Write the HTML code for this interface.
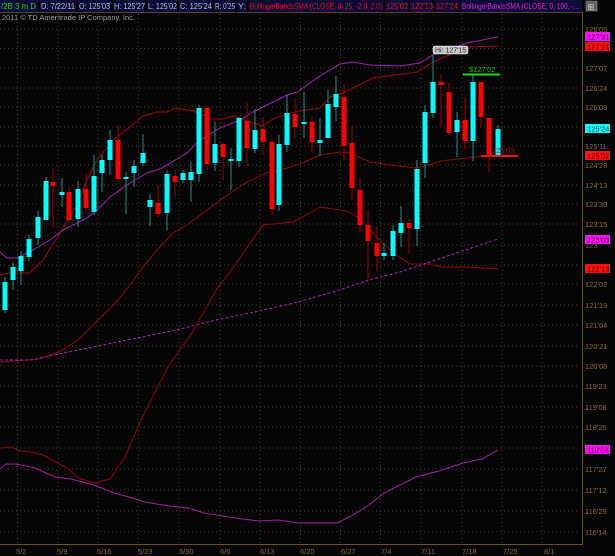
<!DOCTYPE html>
<html><head><meta charset="utf-8"><style>
html,body{margin:0;padding:0;background:#050505;}
svg{display:block;font-family:"Liberation Sans",sans-serif;}
</style></head><body>
<svg width="615" height="556" viewBox="0 0 615 556" xmlns="http://www.w3.org/2000/svg">
<rect width="615" height="556" fill="#050505"/>
<!-- header -->
<rect x="0" y="0" width="582" height="12" fill="#0c0c3a"/>
<g stroke="#000" stroke-width="2">
<line x1="39" y1="0" x2="39" y2="12"/><line x1="77" y1="0" x2="77" y2="12"/><line x1="112" y1="0" x2="112" y2="12"/><line x1="146" y1="0" x2="146" y2="12"/><line x1="178" y1="0" x2="178" y2="12"/><line x1="213" y1="0" x2="213" y2="12"/><line x1="236" y1="0" x2="236" y2="12"/><line x1="248" y1="0" x2="248" y2="12"/><line x1="384" y1="0" x2="384" y2="12"/><line x1="409" y1="0" x2="409" y2="12"/><line x1="434" y1="0" x2="434" y2="12"/><line x1="460" y1="0" x2="460" y2="12"/>
</g>
<line x1="0" y1="12.5" x2="582" y2="12.5" stroke="#5a4420" stroke-width="1"/>
<g font-size="8" fill="#b8b8c8" lengthAdjust="spacingAndGlyphs">
<text x="1" y="9" fill="#20d020" textLength="35" lengthAdjust="spacingAndGlyphs">/2B 3 m D</text>
<text x="41" y="9" textLength="34" lengthAdjust="spacingAndGlyphs">D: 7/22/11</text>
<text x="79" y="9" textLength="31" lengthAdjust="spacingAndGlyphs">O: 125'03</text>
<text x="114" y="9" textLength="31" lengthAdjust="spacingAndGlyphs">H: 125'27</text>
<text x="148" y="9" textLength="29" lengthAdjust="spacingAndGlyphs">L: 125'02</text>
<text x="180" y="9" textLength="32" lengthAdjust="spacingAndGlyphs">C: 125'24</text>
<text x="215" y="9" textLength="20" lengthAdjust="spacingAndGlyphs">R: 0'25</text>
<text x="238" y="9" textLength="8" lengthAdjust="spacingAndGlyphs">Y:</text>
<text x="250" y="9" fill="#e01010" textLength="132" lengthAdjust="spacingAndGlyphs">BollingerBandsSMA (CLOSE, 0, 25, -2.0, 2.0)</text>
<text x="386" y="9" fill="#e01010" textLength="22" lengthAdjust="spacingAndGlyphs">125'02</text>
<text x="411" y="9" fill="#e01010" textLength="22" lengthAdjust="spacingAndGlyphs">122'13</text>
<text x="436" y="9" fill="#e01010" textLength="22" lengthAdjust="spacingAndGlyphs">127'24</text>
<text x="462" y="9" fill="#d020d0" textLength="117" lengthAdjust="spacingAndGlyphs">BollingerBandsSMA (CLOSE, 0, 100, -...</text>
</g>
<rect x="586" y="1" width="11" height="10" fill="#606060" stroke="#909090" stroke-width="0.5"/>
<text x="587.5" y="9.5" font-size="8" fill="#ddd">⊞</text>
<text x="2" y="20" font-size="7.5" fill="#9a9a9a">2011 © TD Ameritrade IP Company, Inc.</text>
<!-- grid -->
<g stroke="#4a3a1c" stroke-width="1" stroke-dasharray="1,3">
<line x1="0" y1="29" x2="578" y2="29"/><line x1="0" y1="48.5" x2="578" y2="48.5"/><line x1="0" y1="68" x2="578" y2="68"/><line x1="0" y1="88" x2="578" y2="88"/><line x1="0" y1="107" x2="578" y2="107"/><line x1="0" y1="127" x2="578" y2="127"/><line x1="0" y1="146" x2="578" y2="146"/><line x1="0" y1="165" x2="578" y2="165"/><line x1="0" y1="185" x2="578" y2="185"/><line x1="0" y1="204" x2="578" y2="204"/><line x1="0" y1="224" x2="578" y2="224"/><line x1="0" y1="245" x2="578" y2="245"/><line x1="0" y1="265" x2="578" y2="265"/><line x1="0" y1="284" x2="578" y2="284"/><line x1="0" y1="305" x2="578" y2="305"/><line x1="0" y1="325" x2="578" y2="325"/><line x1="0" y1="346" x2="578" y2="346"/><line x1="0" y1="366" x2="578" y2="366"/><line x1="0" y1="386" x2="578" y2="386"/><line x1="0" y1="407" x2="578" y2="407"/><line x1="0" y1="427" x2="578" y2="427"/><line x1="0" y1="448" x2="578" y2="448"/><line x1="0" y1="469" x2="578" y2="469"/><line x1="0" y1="490" x2="578" y2="490"/><line x1="0" y1="511" x2="578" y2="511"/><line x1="0" y1="532" x2="578" y2="532"/>
<line x1="17.5" y1="14" x2="17.5" y2="544"/><line x1="58" y1="14" x2="58" y2="544"/><line x1="98" y1="14" x2="98" y2="544"/><line x1="138.5" y1="14" x2="138.5" y2="544"/><line x1="179" y1="14" x2="179" y2="544"/><line x1="220" y1="14" x2="220" y2="544"/><line x1="260" y1="14" x2="260" y2="544"/><line x1="300.5" y1="14" x2="300.5" y2="544"/><line x1="340.5" y1="14" x2="340.5" y2="544"/><line x1="380.5" y1="14" x2="380.5" y2="544"/><line x1="421" y1="14" x2="421" y2="544"/><line x1="462" y1="14" x2="462" y2="544"/><line x1="502" y1="14" x2="502" y2="544"/><line x1="542" y1="14" x2="542" y2="544"/>
</g>
<!-- axes -->
<g stroke="#6a5024" stroke-width="1">
<line x1="582.5" y1="12" x2="582.5" y2="544"/>
<line x1="0" y1="544.5" x2="583" y2="544.5"/>
</g>
<g font-size="7.5" fill="#8a6a34">
<text x="585" y="32">128'05</text><text x="585" y="71">127'07</text><text x="585" y="91">126'24</text><text x="585" y="110">126'09</text><text x="585" y="149">125'11</text><text x="585" y="168">124'28</text><text x="585" y="188">124'13</text><text x="585" y="207">123'30</text><text x="585" y="227">123'15</text><text x="585" y="248">123</text><text x="585" y="287">122'02</text><text x="585" y="308">121'19</text><text x="585" y="328">121'04</text><text x="585" y="349">120'21</text><text x="585" y="369">120'06</text><text x="585" y="389">119'23</text><text x="585" y="410">119'08</text><text x="585" y="430">118'25</text><text x="585" y="472">117'27</text><text x="585" y="493">117'12</text><text x="585" y="514">116'29</text><text x="585" y="535">116'14</text>
<text x="16" y="554">5/2</text><text x="57" y="554">5/9</text><text x="97" y="554">5/16</text><text x="138" y="554">5/23</text><text x="179" y="554">5/30</text><text x="220" y="554">6/6</text><text x="260" y="554">6/13</text><text x="300" y="554">6/20</text><text x="341" y="554">6/27</text><text x="381" y="554">7/4</text><text x="421" y="554">7/11</text><text x="462" y="554">7/18</text><text x="503" y="554">7/25</text><text x="544" y="554">8/1</text>
</g>
<!-- lines -->
<g fill="none" stroke-width="1">
<polyline stroke="#9a0a0a" points="0,275 10,273 20,273 30,273 43,260 60,233 77,205 87,180 97,160 113,140 130,127 143,116 157,112 167,112 175,108 193,111 213,119 223,119 233,116 247,121 263,126 273,119 287,114 300,111 320,108 330,97 343,93 373,78 417,72 433,62 467,47 498,46"/>
<polyline stroke="#a020b0" points="0,252 7,258 17,258 33,250 50,240 63,230 87,218 97,210 110,197 130,183 147,173 160,169 187,153 200,140 220,128 240,120 253,112 267,105 287,95 297,92 317,78 340,64 353,62 370,65 400,66 420,63 433,55 467,43 498,37"/>
<polyline stroke="#8a0a0a" points="0,362 39,359 59,352 78,340 98,320 118,300 130,285 143,267 157,250 173,233 187,225 207,210 223,198 247,182 267,173 287,168 300,164 320,155 340,152 350,153 370,162 390,165 417,168 430,165 440,161 467,158 498,155"/>
<polyline stroke="#8a0a0a" points="0,448 12,447 20,451 31,452 43,455 69,469 78,478 94,483 110,479 125,457 141,420 169,365 192,333 216,290 230,272 263,225 293,222 310,213 320,207 347,211 357,217 373,233 393,253 410,264 430,264 440,267 467,267 498,269"/>
<polyline stroke="#a020a0" points="0,469 6,464 16,464 35,468 55,477 71,479 94,485 114,493 129,497 145,502 169,506 188,508 204,513 235,518 259,521 278,520 298,523 337,523 353,515 369,505 384,493 416,477 439,471 463,463 482,459 498,450"/>
<polyline stroke="#a020b0" stroke-dasharray="3,2" points="0,360 31,360 59,354 98,346 137,338 176,330 216,320 255,312 294,303 333,292 369,280 400,272 498,239"/>
</g>
<g>
<line x1="5" y1="277" x2="5" y2="313" stroke="#1f8f8f"/><rect x="2.5" y="282" width="5" height="28" fill="#00ffff"/>
<line x1="13" y1="262" x2="13" y2="290" stroke="#1f8f8f"/><rect x="10.5" y="267" width="5" height="13" fill="#00ffff"/>
<line x1="21" y1="251" x2="21" y2="285" stroke="#1f8f8f"/><rect x="18.5" y="256" width="5" height="15" fill="#00ffff"/>
<line x1="29" y1="235" x2="29" y2="261" stroke="#1f8f8f"/><rect x="26.5" y="239" width="5" height="18" fill="#00ffff"/>
<line x1="38" y1="211" x2="38" y2="245" stroke="#1f8f8f"/><rect x="35.5" y="217" width="5" height="21" fill="#00ffff"/>
<line x1="46" y1="177" x2="46" y2="220" stroke="#1f8f8f"/><rect x="43.5" y="181" width="5" height="39" fill="#00ffff"/>
<line x1="53" y1="169" x2="53" y2="228" stroke="#9a0000"/><rect x="50.5" y="182" width="5" height="4" fill="#ff0000"/>
<line x1="62" y1="178" x2="62" y2="207" stroke="#1f8f8f"/><rect x="59.5" y="192" width="5" height="3" fill="#00ffff"/>
<line x1="69" y1="187" x2="69" y2="222" stroke="#9a0000"/><rect x="66.5" y="192" width="5" height="28" fill="#ff0000"/>
<line x1="78" y1="181" x2="78" y2="227" stroke="#1f8f8f"/><rect x="75.5" y="189" width="5" height="30" fill="#00ffff"/>
<line x1="86" y1="173" x2="86" y2="213" stroke="#9a0000"/><rect x="83.5" y="189" width="5" height="19" fill="#ff0000"/>
<line x1="94" y1="155" x2="94" y2="215" stroke="#1f8f8f"/><rect x="91.5" y="176" width="5" height="36" fill="#00ffff"/>
<line x1="102" y1="155" x2="102" y2="192" stroke="#1f8f8f"/><rect x="99.5" y="160" width="5" height="13" fill="#00ffff"/>
<line x1="110" y1="130" x2="110" y2="175" stroke="#1f8f8f"/><rect x="107.5" y="140" width="5" height="20" fill="#00ffff"/>
<line x1="118" y1="125" x2="118" y2="182" stroke="#9a0000"/><rect x="115.5" y="140" width="5" height="39" fill="#ff0000"/>
<line x1="126" y1="172" x2="126" y2="214" stroke="#1f8f8f"/><rect x="123.5" y="177" width="5" height="2" fill="#00ffff"/>
<line x1="134" y1="160" x2="134" y2="187" stroke="#1f8f8f"/><rect x="131.5" y="166" width="5" height="7" fill="#00ffff"/>
<line x1="143" y1="134" x2="143" y2="166" stroke="#1f8f8f"/><rect x="140.5" y="153" width="5" height="10" fill="#00ffff"/>
<line x1="150" y1="194" x2="150" y2="226" stroke="#1f8f8f"/><rect x="147.5" y="200" width="5" height="7" fill="#00ffff"/>
<line x1="158" y1="185" x2="158" y2="217" stroke="#9a0000"/><rect x="155.5" y="203" width="5" height="11" fill="#ff0000"/>
<line x1="167" y1="170" x2="167" y2="230" stroke="#1f8f8f"/><rect x="164.5" y="174" width="5" height="39" fill="#00ffff"/>
<line x1="175" y1="170" x2="175" y2="197" stroke="#9a0000"/><rect x="172.5" y="176" width="5" height="6" fill="#ff0000"/>
<line x1="183" y1="170" x2="183" y2="183" stroke="#1f8f8f"/><rect x="180.5" y="173" width="5" height="7" fill="#00ffff"/>
<line x1="191" y1="162" x2="191" y2="202" stroke="#1f8f8f"/><rect x="188.5" y="172" width="5" height="8" fill="#00ffff"/>
<line x1="199" y1="105" x2="199" y2="182" stroke="#1f8f8f"/><rect x="196.5" y="108" width="5" height="66" fill="#00ffff"/>
<line x1="207" y1="105" x2="207" y2="170" stroke="#9a0000"/><rect x="204.5" y="108" width="5" height="56" fill="#ff0000"/>
<line x1="215" y1="122" x2="215" y2="171" stroke="#1f8f8f"/><rect x="212.5" y="144" width="5" height="19" fill="#00ffff"/>
<line x1="223" y1="143" x2="223" y2="180" stroke="#9a0000"/><rect x="220.5" y="144" width="5" height="13" fill="#ff0000"/>
<line x1="231" y1="148" x2="231" y2="190" stroke="#1f8f8f"/><rect x="228.5" y="159" width="5" height="2" fill="#00ffff"/>
<line x1="239" y1="117" x2="239" y2="167" stroke="#1f8f8f"/><rect x="236.5" y="118" width="5" height="43" fill="#00ffff"/>
<line x1="247" y1="103" x2="247" y2="166" stroke="#9a0000"/><rect x="244.5" y="121" width="5" height="27" fill="#ff0000"/>
<line x1="255" y1="109" x2="255" y2="153" stroke="#1f8f8f"/><rect x="252.5" y="130" width="5" height="19" fill="#00ffff"/>
<line x1="263" y1="117" x2="263" y2="155" stroke="#9a0000"/><rect x="260.5" y="129" width="5" height="13" fill="#ff0000"/>
<line x1="272" y1="140" x2="272" y2="215" stroke="#9a0000"/><rect x="269.5" y="142" width="5" height="67" fill="#ff0000"/>
<line x1="279" y1="135" x2="279" y2="211" stroke="#1f8f8f"/><rect x="276.5" y="144" width="5" height="61" fill="#00ffff"/>
<line x1="287" y1="95" x2="287" y2="152" stroke="#1f8f8f"/><rect x="284.5" y="113" width="5" height="32" fill="#00ffff"/>
<line x1="295" y1="99" x2="295" y2="139" stroke="#9a0000"/><rect x="292.5" y="114" width="5" height="13" fill="#ff0000"/>
<line x1="304" y1="92" x2="304" y2="138" stroke="#1f8f8f"/><rect x="301.5" y="122" width="5" height="2" fill="#00ffff"/>
<line x1="312" y1="116" x2="312" y2="152" stroke="#9a0000"/><rect x="309.5" y="122" width="5" height="20" fill="#ff0000"/>
<line x1="320" y1="118" x2="320" y2="156" stroke="#1f8f8f"/><rect x="317.5" y="140" width="5" height="3" fill="#00ffff"/>
<line x1="328" y1="90" x2="328" y2="138" stroke="#1f8f8f"/><rect x="325.5" y="104" width="5" height="34" fill="#00ffff"/>
<line x1="336" y1="76" x2="336" y2="121" stroke="#1f8f8f"/><rect x="333.5" y="94" width="5" height="13" fill="#00ffff"/>
<line x1="344" y1="84" x2="344" y2="160" stroke="#9a0000"/><rect x="341.5" y="97" width="5" height="49" fill="#ff0000"/>
<line x1="352" y1="125" x2="352" y2="200" stroke="#9a0000"/><rect x="349.5" y="143" width="5" height="45" fill="#ff0000"/>
<line x1="360" y1="178" x2="360" y2="233" stroke="#9a0000"/><rect x="357.5" y="190" width="5" height="35" fill="#ff0000"/>
<line x1="368" y1="210" x2="368" y2="280" stroke="#9a0000"/><rect x="365.5" y="225" width="5" height="16" fill="#ff0000"/>
<line x1="377" y1="226" x2="377" y2="271" stroke="#9a0000"/><rect x="374.5" y="243" width="5" height="13" fill="#ff0000"/>
<line x1="384" y1="243" x2="384" y2="260" stroke="#1f8f8f"/><rect x="381.5" y="253" width="5" height="3" fill="#00ffff"/>
<line x1="393" y1="225" x2="393" y2="260" stroke="#1f8f8f"/><rect x="390.5" y="231" width="5" height="25" fill="#00ffff"/>
<line x1="401" y1="206" x2="401" y2="247" stroke="#1f8f8f"/><rect x="398.5" y="223" width="5" height="10" fill="#00ffff"/>
<line x1="409" y1="219" x2="409" y2="254" stroke="#9a0000"/><rect x="406.5" y="223" width="5" height="5" fill="#ff0000"/>
<line x1="417" y1="160" x2="417" y2="246" stroke="#1f8f8f"/><rect x="414.5" y="169" width="5" height="60" fill="#00ffff"/>
<line x1="425" y1="105" x2="425" y2="178" stroke="#1f8f8f"/><rect x="422.5" y="112" width="5" height="51" fill="#00ffff"/>
<line x1="433" y1="55" x2="433" y2="118" stroke="#1f8f8f"/><rect x="430.5" y="82" width="5" height="31" fill="#00ffff"/>
<line x1="441" y1="74" x2="441" y2="126" stroke="#9a0000"/><rect x="438.5" y="82" width="5" height="3" fill="#ff0000"/>
<line x1="449" y1="83" x2="449" y2="135" stroke="#9a0000"/><rect x="446.5" y="92" width="5" height="41" fill="#ff0000"/>
<line x1="457" y1="112" x2="457" y2="157" stroke="#1f8f8f"/><rect x="454.5" y="120" width="5" height="12" fill="#00ffff"/>
<line x1="465" y1="97" x2="465" y2="149" stroke="#9a0000"/><rect x="462.5" y="120" width="5" height="21" fill="#ff0000"/>
<line x1="473" y1="74" x2="473" y2="161" stroke="#1f8f8f"/><rect x="470.5" y="82" width="5" height="59" fill="#00ffff"/>
<line x1="481" y1="82" x2="481" y2="127" stroke="#9a0000"/><rect x="478.5" y="82" width="5" height="35" fill="#ff0000"/>
<line x1="489" y1="118" x2="489" y2="172" stroke="#9a0000"/><rect x="486.5" y="118" width="5" height="39" fill="#ff0000"/>
<line x1="498" y1="125" x2="498" y2="157" stroke="#1f8f8f"/><rect x="495.5" y="129" width="5" height="27" fill="#00ffff"/>
</g>
<!-- annotations -->
<rect x="433" y="46" width="35" height="8" rx="2" fill="#c8c8c8" stroke="#eee" stroke-width="0.5"/>
<text x="435" y="52.5" font-size="7" fill="#333">Hi: 127'15</text>
<line x1="463" y1="74.5" x2="500" y2="74.5" stroke="#10e010" stroke-width="2"/>
<text x="469" y="72" font-size="7.5" fill="#10c010">$127'02</text>
<line x1="481" y1="156" x2="518" y2="156" stroke="#ff1010" stroke-width="2"/>
<text x="492" y="153" font-size="7.5" fill="#a01010">125'03</text>
<!-- price boxes -->
<g font-size="7.5">
<rect x="585" y="32" width="25" height="9" fill="#ff10ff"/><text x="587" y="39.5" fill="#400040">127'31</text>
<rect x="585" y="42" width="25" height="9" fill="#ff1010"/><text x="587" y="49.5" fill="#500000">127'24</text>
<rect x="585" y="124" width="25" height="9" fill="#10ffff"/><text x="587" y="131.5" fill="#004040">125'24</text>
<rect x="585" y="151" width="25" height="9" fill="#ff1010"/><text x="587" y="158.5" fill="#500000">125'02</text>
<rect x="585" y="235" width="25" height="9" fill="#ff10ff"/><text x="587" y="242.5" fill="#400040">123'03</text>
<rect x="585" y="264" width="25" height="9" fill="#ff1010"/><text x="587" y="271.5" fill="#500000">122'13</text>
<rect x="585" y="445" width="25" height="9" fill="#ff10ff"/><text x="587" y="452.5" fill="#400040">118'08</text>
</g>
</svg>
</body></html>
